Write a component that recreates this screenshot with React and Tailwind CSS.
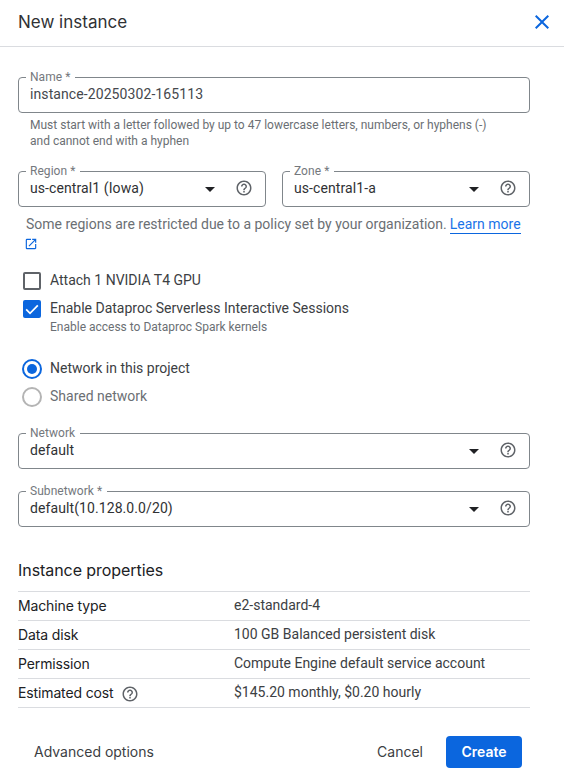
import { MdClose, MdHelpOutline, MdOpenInNew } from "react-icons/md";

const display = "font-['Inter','Noto_Sans',sans-serif]";

function Field({ label, value, valueColor = "text-[#303134]", select, className = "" }) {
  return (
    <fieldset className={`h-11 min-w-0 rounded-[4px] border border-[#80868b] ${className}`}>
      <legend className="ml-[7px] h-[17px] whitespace-nowrap pl-1 pr-[5px] text-xs leading-[17px] tracking-[0.05px] text-[#74787d]">
        {label}
      </legend>
      <div className="flex h-4 items-center pl-[11px] pr-3">
        <span className={`flex-1 whitespace-nowrap text-sm leading-4 tracking-[0.09px] ${valueColor}`}>{value}</span>
        {select && (
          <>
            <svg width="10" height="5" viewBox="0 0 10 5" className="mr-5 mt-0.5">
              <path d="M0 0h10L5 5z" fill="#202124" />
            </svg>
            <MdHelpOutline size={18} className="text-[#5f6368]" />
          </>
        )}
      </div>
    </fieldset>
  );
}

function Property({ name, value, help }) {
  return (
    <div className="flex h-[29px] border-b border-[#dadce0] text-sm text-[#3c4043]">
      <div className={`flex w-[216px] items-center whitespace-nowrap tracking-[-0.13px] text-[#202124] ${display}`}>
        <span>{name}</span>
        {help && <MdHelpOutline size={18} className="ml-[7px] mt-0.5 text-[#5f6368]" />}
      </div>
      <div className="whitespace-nowrap pt-[3px] leading-5">{value}</div>
    </div>
  );
}

export default function App() {
  return (
    <div className="flex h-[784px] w-[564px] flex-col overflow-hidden bg-white font-['Roboto',sans-serif]">
      <header className="flex h-[47px] shrink-0 items-center justify-between border-b border-[#dadce0] pb-0.5 pl-[18px] pr-2.5">
        <h1 className={`pt-0.5 text-[17px] text-[#303134] ${display}`}>New instance</h1>
        <MdClose size={24} className="text-[#0b66de]" />
      </header>

      <main className="flex flex-col pl-[18px] pr-[34px] pt-[22px]">
        <Field label="Name *" value="instance-20250302-165113" valueColor="text-[#45484d]" />
        <p className="mt-1 pl-3 text-xs leading-4 text-[#6b6f74]">
          <span className="whitespace-nowrap">Must start with a letter followed by up to 47 lowercase letters, numbers, or hyphens (-)</span>
          <br />
          and cannot end with a hyphen
        </p>

        <div className="mt-3.5 flex gap-4">
          <Field className="flex-1" label="Region *" value="us-central1 (Iowa)" select />
          <Field className="flex-1" label="Zone *" value="us-central1-a" select />
        </div>
        <div className="mt-[7px] pl-2 text-sm leading-5 text-[#6b6f74]">
          <div className="flex whitespace-nowrap">
            Some regions are restricted due to a policy set by your organization.
            <a className="ml-[3px] h-5 border-b border-[#0b66de] text-[#1a73e8]">Learn more</a>
          </div>
          <div className="flex h-5 items-center">
            <MdOpenInNew size={14} className="-ml-[2px] text-[#0b66de]" />
          </div>
        </div>

        <label className="mt-4 flex h-5 items-center pl-[5px]">
          <span className="mt-0.5 size-[18px] rounded-[2px] border-2 border-[#5f6368]" />
          <span className="ml-[9px] text-sm text-[#3c4043]">Attach 1 NVIDIA T4 GPU</span>
        </label>
        <label className="mt-2 flex h-5 items-center pl-[5px]">
          <span className="mt-0.5 flex size-[18px] items-center justify-center rounded-[2px] bg-[#0b66de]">
            <svg width="14" height="14" viewBox="0 0 24 24" fill="none" stroke="#fff" strokeWidth="3">
              <path d="M2 12.7 8.6 19.3 22 5.8" />
            </svg>
          </span>
          <span className="ml-[9px] text-sm text-[#3c4043]">Enable Dataproc Serverless Interactive Sessions</span>
        </label>
        <p className="mt-px pl-8 text-xs leading-4 text-[#6b6f74]">Enable access to Dataproc Spark kernels</p>

        <label className="mt-[23px] flex h-5 items-center pl-1">
          <span className="mt-0.5 flex size-5 items-center justify-center rounded-full border-2 border-[#0b66de]">
            <span className="size-2.5 rounded-full bg-[#0b66de]" />
          </span>
          <span className="ml-2 text-sm text-[#3c4043]">Network in this project</span>
        </label>
        <label className="mt-2 flex h-5 items-center pl-1">
          <span className="mt-0.5 size-5 rounded-full border-2 border-[#b4b4b4]" />
          <span className="ml-2 text-sm text-[#6b6f74]">Shared network</span>
        </label>

        <Field className="mt-[19px]" label="Network" value="default" select />
        <Field className="mt-3.5" label="Subnetwork *" value="default(10.128.0.0/20)" select />

        <h2 className={`mt-[31px] h-[33px] text-base leading-6 tracking-[-0.06px] text-[#202124] ${display}`}>Instance properties</h2>
        <div className="border-t border-[#dadce0]">
          <Property name="Machine type" value="e2-standard-4" />
          <Property name="Data disk" value="100 GB Balanced persistent disk" />
          <Property name="Permission" value="Compute Engine default service account" />
          <Property name="Estimated cost" value="$145.20 monthly, $0.20 hourly" help />
        </div>
      </main>

      <footer className={`mt-7 flex h-8 items-center pl-[34px] pr-[42px] text-sm text-[#3c4043] ${display}`}>
        <button>Advanced options</button>
        <button className="ml-auto mr-[23px]">Cancel</button>
        <button className="h-8 w-[76px] rounded-[4px] bg-[#0b66de] font-semibold text-white">Create</button>
      </footer>
    </div>
  );
}
